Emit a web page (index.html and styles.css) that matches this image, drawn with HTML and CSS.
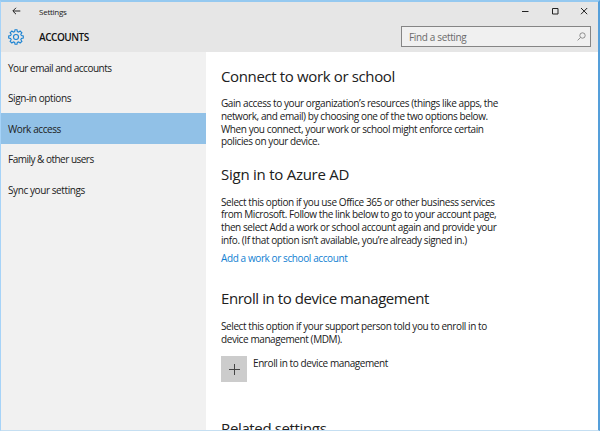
FILE: index.html
```html
<!DOCTYPE html>
<html lang="en">
<head>
<meta charset="utf-8">
<title>Settings</title>
<link rel="stylesheet" href="styles.css">
</head>
<body>
<div class="window">
  <header class="header">
    <div class="titlebar">
      <svg class="back" viewBox="0 0 9 8"><path d="M8.3 4H1M4 .8.8 4 4 7.2"/></svg>
      <span class="app-name">Settings</span>
      <div class="controls">
        <svg viewBox="0 0 8 8"><path d="M1 4.5h6.5"/></svg>
        <svg viewBox="0 0 8 8"><path d="M1.5 1.5h5.5v5.5h-5.5z"/></svg>
        <svg viewBox="0 0 8 8"><path d="M1 1l6.2 6.2M7.2 1 1 7.2"/></svg>
      </div>
    </div>
    <div class="toolbar">
      <svg class="gear" viewBox="0 0 16 16"><path d="M6.7 2.5 7 .7h2l.3 1.8 1.3.6 1.5-1.1 1.8 1.7-1.1 1.5.6 1.4 1.9.4v2l-1.9.4-.6 1.3 1.1 1.6-1.8 1.7-1.5-1.1-1.3.6-.3 1.8H7l-.3-1.8-1.3-.6L3.900 14 2.100 12.300l1.100-1.600-.6-1.300L.7 9V7l1.900-.4.6-1.400L2.100 3.700 3.900 2l1.500 1.100z"/><circle cx="8" cy="8" r="2.500"/></svg>
      <h1 class="page-title">ACCOUNTS</h1>
      <div class="search">
        <span>Find a setting</span>
        <svg viewBox="0 0 9 9"><circle cx="5.500" cy="3.500" r="2.700"/><path d="M3.500 5.500.6 8.400"/></svg>
      </div>
    </div>
  </header>
  <div class="body">
    <nav class="sidebar">
      <a class="item item-email">Your email and accounts</a>
      <a class="item">Sign-in options</a>
      <a class="item selected">Work access</a>
      <a class="item item-family">Family &amp; other users</a>
      <a class="item">Sync your settings</a>
    </nav>
    <main class="content">
      <section class="connect">
        <h2>Connect to work or school</h2>
        <p>Gain access to your organization’s resources (things like apps, the<br>network, and email) by choosing one of the two options below.<br>When you connect, your work or school might enforce certain<br>policies on your device.</p>
      </section>
      <section class="azure">
        <h2>Sign in to Azure AD</h2>
        <p>Select this option if you use Office 365 or other business services<br>from Microsoft. Follow the link below to go to your account page,<br>then select Add a work or school account again and provide your<br>info. (If that option isn’t available, you’re already signed in.)</p>
        <a class="link">Add a work or school account</a>
      </section>
      <section class="enroll">
        <h2>Enroll in to device management</h2>
        <p>Select this option if your support person told you to enroll in to<br>device management (MDM).</p>
        <div class="action">
          <span class="plus"><svg viewBox="0 0 11 11"><path d="M5.500 0v11M0 5.500h11"/></svg></span>
          <span class="action-label">Enroll in to device management</span>
        </div>
      </section>
      <section class="related">
        <h2>Related settings</h2>
      </section>
    </main>
  </div>
</div>
</body>
</html>
```
FILE: styles.css
```css
* { box-sizing: border-box; }

body {
  margin: 0;
  font-family: "Open Sans", "Noto Sans", sans-serif;
  font-size: 10px;
  letter-spacing: -0.410px;
  color: #202020;
}

svg { fill: none; stroke: #222; stroke-width: 1; display: block; }

h1, h2, p { margin: 0; font-weight: 400; }

.window {
  width: 600px;
  height: 431px;
  overflow: hidden;
  display: flex;
  flex-direction: column;
  border-style: solid;
  border-width: 2px 2px 1px 1px;
  border-color: #95c9f0 #559fda #c5dff2 #a6d3f8;
}

.header { flex: none; height: 50px; background: #e6e6e6; }

.titlebar { height: 18px; display: flex; align-items: center; padding: 0 10px 0 11px; }
.back { width: 9px; height: 8px; margin-right: 18px; }
.app-name { font-size: 8px; letter-spacing: -0.250px; }
.controls { margin-left: auto; display: flex; gap: 21.500px; }
.controls svg { width: 8px; height: 8px; }

.toolbar { height: 32px; display: flex; align-items: center; padding: 1px 7px 0; }
.gear { width: 16px; height: 16px; margin-right: 15px; }
.gear path, .gear circle { stroke: #1a82d2; stroke-width: 1.100; }
.page-title { font-size: 10px; font-weight: 600; letter-spacing: -0.470px; color: #111; }
.search {
  margin-left: auto;
  width: 190px;
  height: 21px;
  border: 1px solid #858585;
  background: #f0f0f0;
  color: #6b6b6b;
  display: flex;
  align-items: center;
  justify-content: space-between;
  padding: 0 4px 0 7px;
}
.search span { letter-spacing: -0.350px; }
.search svg { width: 9px; height: 9px; stroke: #777; stroke-width: 0.800; }

.body { flex: 1; min-height: 0; display: flex; }

.sidebar { flex: none; width: 205px; background: #f1f1f1; padding-top: 0.300px; }
.item { display: flex; align-items: center; height: 30.600px; padding-left: 7px; }
.item-email { letter-spacing: -0.480px; }
.item-family { letter-spacing: -0.510px; }
.selected { background: #91c1e7; }

.content { flex: 1; padding: 14px 0 0 15px; white-space: nowrap; overflow: hidden; }
h2 { font-size: 15px; line-height: 20px; letter-spacing: -0.360px; }
.azure h2 { letter-spacing: -0.250px; }
.enroll h2 { letter-spacing: -0.430px; }
p { line-height: 12.800px; }
section p { margin-top: 12px; }
.connect { height: 97.500px; }
.connect p { margin-top: 11px; }
.azure { height: 124.500px; }
.enroll { height: 130px; }
.link { display: block; margin-top: 4px; line-height: 14px; letter-spacing: -0.400px; color: #0f80d2; }
.action { display: flex; margin-top: 10.500px; }
.plus { width: 26px; height: 26px; background: #ccc; display: flex; align-items: center; justify-content: center; }
.plus svg { width: 11px; height: 11px; stroke: #444; }
.action-label { margin-left: 6px; line-height: 14px; }
```
